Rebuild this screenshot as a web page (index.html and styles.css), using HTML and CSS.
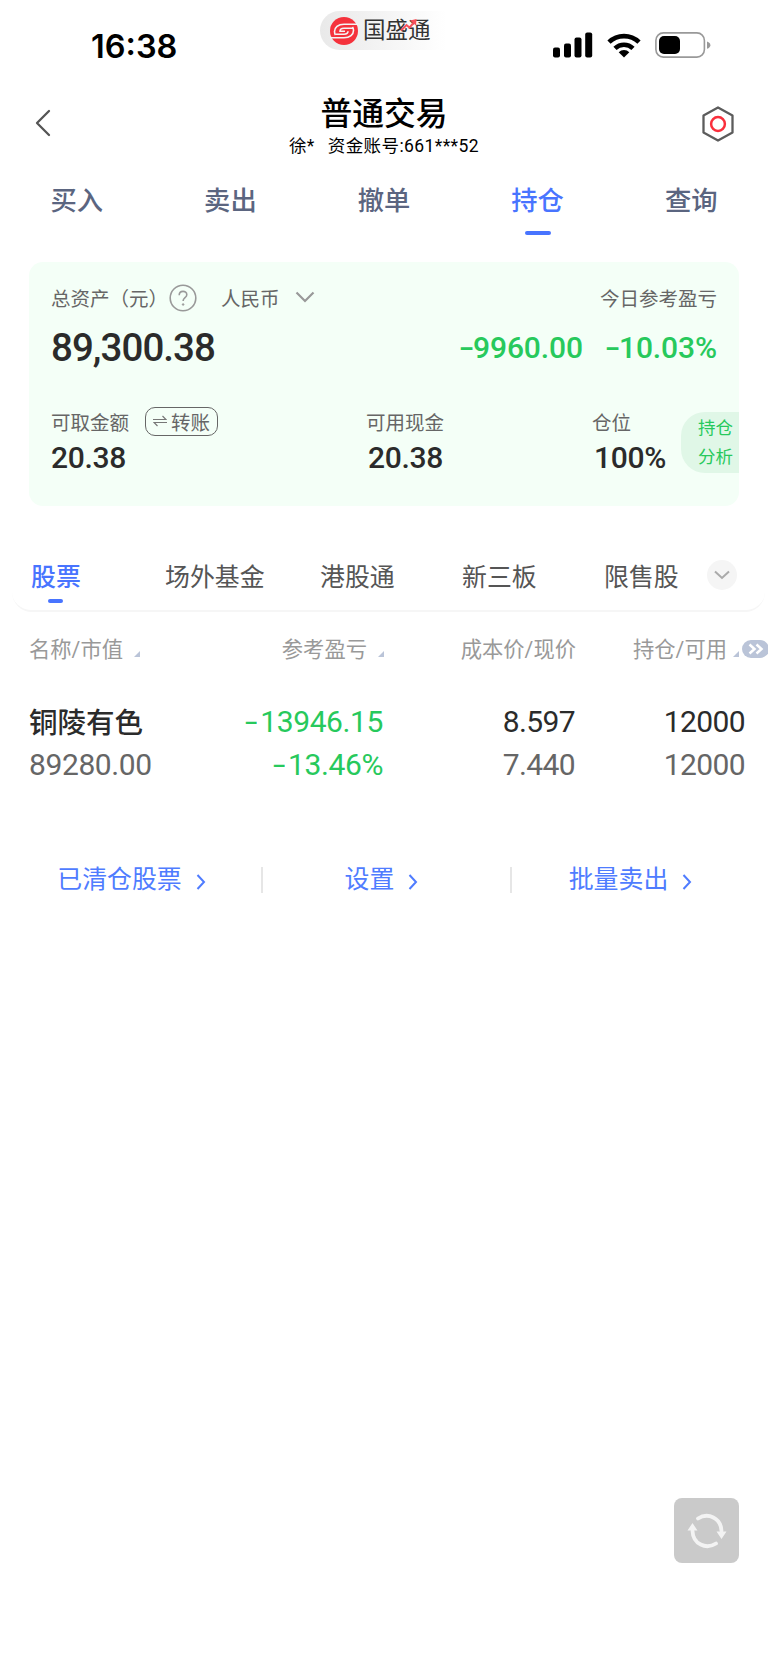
FILE: index.html
```html
<!DOCTYPE html>
<html lang="zh-CN">
<head>
    <meta charset="UTF-8">
    <title>普通交易</title>
    <link rel="stylesheet" href="styles.css">
</head>
<body>
    <div class="container">
        <div class="status">
            <span class="time">16:38</span>
            <div class="brand">
                <svg width="28" height="28" viewBox="0 0 28 28" fill="none" stroke="#f4f4f4" stroke-width="1.600">
                    <circle cx="14" cy="14" r="14" fill="#f5323c" stroke="none"/>
                    <path d="M28 7.200H14C8 7.200 4.500 10.500 4.500 14.500c0 1.500.3 2.500 1 3.500M0 20.800h14c6 0 9.500-3.300 9.500-7.300 0-1.500-.3-2.500-1-3.500"/>
                    <path d="M23 11.300H14c-2.500 0-4 1-4 3h5M5.500 17.200H14c2.500 0 4-1 4-2.900"/>
                </svg>
                <span>国盛通</span>
                <svg class="trend" width="18" height="13" viewBox="0 0 18 13">
                    <path d="M1 11.500L6.500 6l3 2.500 4-4.500" fill="none" stroke="#f8505a" stroke-width="2"/>
                    <path d="M10 1.500L16.500 0l-.5 6.500z" fill="#f8505a"/>
                </svg>
            </div>
            <div class="signals">
                <svg width="40" height="26" viewBox="0 0 40 26">
                    <rect x="0" y="15.500" width="7" height="10" rx="2"/>
                    <rect x="11" y="11.500" width="7" height="14" rx="2"/>
                    <rect x="21.500" y="5.500" width="7" height="20" rx="2"/>
                    <rect x="32.200" y="0.500" width="7" height="25" rx="2"/>
                </svg>
                <svg width="34" height="26" viewBox="0 0 34 26">
                    <path d="M2 10.200a21.500 21.500 0 0 1 30 0M8 16.300a13 13 0 0 1 18 0" fill="none" stroke="#000" stroke-width="4.600"/>
                    <path d="M17 25.500l-5.300-5.200a7.500 7.500 0 0 1 10.600 0z"/>
                </svg>
                <svg width="56" height="26" viewBox="0 0 56 26">
                    <rect x="0.900" y="0.900" width="48.500" height="24.200" rx="7.500" fill="none" stroke="#999" stroke-width="1.600"/>
                    <rect x="4" y="4" width="21" height="18" rx="5"/>
                    <path d="M52 9.500c4.500 1.500 4.500 5.800 0 7.300z" fill="#999"/>
                </svg>
            </div>
        </div>

        <header class="header">
            <svg width="32" height="28" viewBox="0 0 32 28" fill="none" stroke="#555" stroke-width="2.300" stroke-linecap="round" stroke-linejoin="round">
                <path d="M15 2L3 14l12 12"/>
            </svg>
            <div class="heading">
                <h1>普通交易</h1>
                <p>徐*<span>资金账号:661***52</span></p>
            </div>
            <svg width="32" height="36" viewBox="0 0 32 36" fill="none">
                <path d="M16 1.500l14.500 8v17L16 34.500l-14.500-8v-17z" stroke="#5c5c5c" stroke-width="2.300" stroke-linejoin="round"/>
                <circle cx="16" cy="18" r="6.900" stroke="#fa2f3c" stroke-width="2.500"/>
            </svg>
        </header>

        <nav class="navi">
            <a>买入</a>
            <a>卖出</a>
            <a>撤单</a>
            <a class="active">持仓</a>
            <a>查询</a>
        </nav>

        <section class="asset">
            <div class="asset-top">
                <span>总资产（元）</span>
                <svg class="help" width="28" height="28" viewBox="0 0 28 28" fill="none" stroke="#999">
                    <circle cx="14" cy="14" r="12.800" stroke-width="1.600"/>
                    <path d="M10.200 11.200c0-5 7.600-5 7.600-.5 0 3-3.700 3-3.700 6.300" stroke-width="1.600"/>
                    <circle cx="14.100" cy="20.500" r="0.800" fill="#999"/>
                </svg>
                <span>人民币</span>
                <svg class="down" width="20" height="12" viewBox="0 0 20 12" fill="none" stroke="#999" stroke-width="2.200">
                    <path d="M1.500 1.500L10 10l8.500-8.500"/>
                </svg>
                <span class="today">今日参考盈亏</span>
            </div>
            <div class="asset-total">
                <strong>89,300.38</strong>
                <span class="loss"><i>-</i>9960.00</span>
                <span class="loss"><i>-</i>10.03%</span>
            </div>
            <div class="asset-bottom">
                <dl>
                    <dt>可取金额
                        <span class="transfer">
                            <svg width="14" height="12" viewBox="0 0 14 12" fill="none" stroke="#777" stroke-width="1.200">
                                <path d="M0 4.500h13L9.500 1M14 7.500H1L4.500 11"/>
                            </svg>转账</span>
                    </dt>
                    <dd>20.38</dd>
                </dl>
                <dl>
                    <dt>可用现金</dt>
                    <dd>20.38</dd>
                </dl>
                <dl>
                    <dt>仓位</dt>
                    <dd>100%</dd>
                </dl>
                <a class="analysis">持仓<br>分析</a>
            </div>
        </section>

        <nav class="kinds">
            <a class="active">股票</a>
            <a>场外基金</a>
            <a>港股通</a>
            <a>新三板</a>
            <a>限售股</a>
            <span class="more">
                <svg width="16" height="10" viewBox="0 0 16 10" fill="none" stroke="#aaa" stroke-width="2">
                    <path d="M1 1.500l7 6.500 7-6.500"/>
                </svg>
            </span>
        </nav>

        <section class="stocks">
            <div class="row title">
                <span class="sort">名称/市值</span>
                <span class="sort">参考盈亏</span>
                <span>成本价/现价</span>
                <span class="sort">持仓/可用</span>
                <svg class="next" width="27" height="18" viewBox="0 0 27 18" fill="none">
                    <rect width="27" height="18" rx="9" fill="#bac4d8"/>
                    <path d="M7.500 4.500l5 4.500-5 4.500M14.500 4.500l5 4.500-5 4.500" stroke="#fff" stroke-width="2.500"/>
                </svg>
            </div>
            <div class="row">
                <strong>铜陵有色</strong>
                <span class="loss"><i>-</i>13946.15</span>
                <span>8.597</span>
                <span>12000</span>
            </div>
            <div class="row second">
                <span>89280.00</span>
                <span class="loss"><i>-</i>13.46%</span>
                <span>7.440</span>
                <span>12000</span>
            </div>
        </section>

        <div class="links">
            <a>已清仓股票<svg width="10" height="16" viewBox="0 0 10 16"><path d="M1.500 1l6.500 7-6.500 7"/></svg></a>
            <a>设置<svg width="10" height="16" viewBox="0 0 10 16"><path d="M1.500 1l6.500 7-6.500 7"/></svg></a>
            <a>批量卖出<svg width="10" height="16" viewBox="0 0 10 16"><path d="M1.500 1l6.500 7-6.500 7"/></svg></a>
        </div>

        <button class="refresh">
            <svg width="42" height="36" viewBox="0 0 42 36" fill="none" stroke="#f3f3f3" stroke-width="3.800" stroke-linecap="round">
                <path d="M12 5.500C22-1 35 5 35.500 18M30 30.500C20 37 7 31 6.500 18"/>
                <path d="M30.500 18.500h10L35.500 26zM1.500 17.500h10L6.500 10z" fill="#f3f3f3" stroke="none"/>
            </svg>
        </button>
    </div>
</body>
</html>
```
FILE: styles.css
```css
* {
    box-sizing: border-box;
    margin: 0;
    padding: 0;
}

body {
    background: #fff;
    color: #2b2b2b;
    font-family: Roboto, "Noto Sans CJK SC", sans-serif;
}

svg {
    display: block;
    flex: none;
}

.container {
    position: relative;
    width: 768px;
    height: 1662px;
    overflow: hidden;
}

/* 状态栏 */
.status {
    display: grid;
    grid-template-columns: 320px 126px 1fr;
    height: 86px;
}

.time {
    padding: 27px 0 0 91px;
    font: 600 32.500px/40px Inter, sans-serif;
    color: #000;
}

.brand {
    position: relative;
    display: flex;
    align-items: center;
    gap: 5px;
    height: 39px;
    margin-top: 11px;
    padding-left: 10px;
    border-radius: 20px 0 0 20px;
    background: linear-gradient(90deg, #e9e9e9, #fff);
    font-size: 22.500px;
    line-height: 38px;
    color: #333;
}

.brand span {
    margin-top: -2px;
}

.trend {
    position: absolute;
    left: 80px;
    top: 8px;
}

.signals {
    display: flex;
    justify-content: flex-end;
    gap: 14px;
    padding: 32px 57px 0 0;
}

/* 标题 */
.header {
    display: flex;
    justify-content: space-between;
    height: 84px;
    padding: 7px 34px 0;
}

.header > svg {
    margin-top: 13px;
}

.header > svg:first-child {
    margin-top: 16px;
}

.heading {
    color: #000;
    text-align: center;
}

h1 {
    font-size: 31.800px;
    font-weight: 500;
    line-height: 42px;
}

.heading p {
    font-size: 17.500px;
    line-height: 22px;
    letter-spacing: 0.400px;
}

.heading p span {
    margin-left: 13px;
}

/* 主菜单 */
.navi {
    display: flex;
    height: 92px;
}

.navi a {
    flex: 1;
    height: 66px;
    padding-top: 11px;
    font-size: 26.300px;
    font-weight: 500;
    line-height: 40px;
    text-align: center;
    color: #5b6580;
}

.navi .active,
.kinds .active {
    color: #4874ff;
}

.navi .active::after,
.kinds .active::after {
    content: "";
    display: block;
    width: 26px;
    height: 4px;
    margin: 10px auto 0;
    border-radius: 2px;
    background: #4874ff;
}

/* 资产 */
.asset {
    height: 244px;
    margin: 0 29px;
    padding: 15px 0 0 22px;
    border-radius: 14px;
    background: #f4fff7;
}

.asset-top {
    display: flex;
    align-items: center;
    height: 40px;
    padding-right: 22px;
    font-size: 19.500px;
    color: #666;
}

.help {
    margin: 1px 24px 0 1px;
}

.down {
    margin-left: 15px;
}

.today {
    margin-left: auto;
}

.asset-total {
    display: flex;
    align-items: center;
    height: 60px;
    padding-right: 22px;
    font-size: 30px;
    font-weight: 500;
    letter-spacing: -0.100px;
}

.asset-total strong {
    margin-right: auto;
    font-size: 38.500px;
    font-weight: 500;
    letter-spacing: -0.950px;
}

.asset-total .loss + .loss {
    margin-left: 22px;
}

.loss {
    color: #27c95c;
}

/* 数字前的负号 */
.loss i {
    display: inline-block;
    width: 14px;
    font-style: normal;
    text-align: left;
    transform: scaleX(1.500);
    transform-origin: left;
}

.asset-bottom {
    display: grid;
    grid-template-columns: 315px 226px 89px 58px;
    margin-top: 22px;
}

.asset-bottom dt {
    display: flex;
    align-items: center;
    height: 44px;
    font-size: 19.500px;
    color: #666;
}

.asset-bottom dd {
    margin-top: 1px;
    font-size: 30px;
    font-weight: 500;
    line-height: 28px;
    letter-spacing: -0.300px;
}

.asset-bottom dl + dl dd {
    padding-left: 2px;
}

.transfer {
    display: flex;
    align-items: center;
    gap: 4px;
    height: 29px;
    margin-left: 16px;
    padding: 0 7px;
    border: 1.500px solid #666;
    border-radius: 10px;
}

.analysis {
    height: 61px;
    margin-top: 13px;
    padding: 2px 0 0 17px;
    border-radius: 24px 0 0 24px;
    background: #e0f7e7;
    font-size: 17.500px;
    line-height: 28.500px;
    color: #27c95c;
}

/* 持仓分类 */
.kinds {
    display: grid;
    grid-template-columns: 134px 155px 142px 142px 103px 30px;
    height: 72px;
    margin: 34px 3px 0 12px;
    padding: 18px 0 0 19px;
    border-bottom: 2px solid #f6f6f6;
    border-radius: 0 0 20px 20px;
    font-size: 24.900px;
    line-height: 40px;
    color: #555;
}

.kinds .active {
    width: 50px;
    font-weight: 500;
}

.kinds .active::after {
    width: 15px;
    margin-top: 1px;
    margin-left: 17px;
}

.more {
    display: flex;
    align-items: center;
    justify-content: center;
    width: 30px;
    height: 30px;
    margin-top: 2px;
    border-radius: 50%;
    background: #f5f5f5;
}

/* 股票列表 */
.row {
    display: grid;
    grid-template-columns: 151px 203px 192px 170px;
    align-items: center;
    height: 43px;
    padding-left: 29px;
    font-size: 30px;
    letter-spacing: -0.600px;
}

.row > span:not(:first-child) {
    text-align: right;
}

.row strong {
    margin-top: -3px;
    font-size: 28.500px;
    font-weight: 500;
    letter-spacing: 0;
}

.row.second {
    color: #666;
}

.row.second > span:first-child {
    letter-spacing: -0.400px;
}

.row .loss {
    letter-spacing: -0.400px;
}

.row .loss i {
    width: 15px;
}

.row.title {
    grid-template-columns: 151px 204px 192px 163px 27px;
    height: 88px;
    padding-bottom: 17px;
    font-size: 21.300px;
    letter-spacing: 0;
    color: #999;
}

.sort::after {
    content: "";
    display: inline-block;
    margin-left: 11px;
    border-left: 6px solid transparent;
    border-bottom: 6px solid #bac4d8;
}

.sort:nth-child(4)::after {
    margin-left: 6px;
}

.next {
    margin: 2px 0 0 3px;
}

/* 底部链接 */
.links {
    display: flex;
    height: 26px;
    margin-top: 81px;
    padding-left: 12px;
}

.links a {
    display: flex;
    align-items: center;
    justify-content: center;
    width: 249px;
    padding-right: 10px;
    font-size: 24.900px;
    line-height: 28px;
    color: #4f7cff;
}

.links a + a {
    border-left: 2px solid #e6e6e6;
}

.links svg {
    margin: 3px 0 0 14px;
    fill: none;
    stroke: #4f7cff;
    stroke-width: 2;
}

.refresh {
    position: absolute;
    right: 29px;
    bottom: 99px;
    display: flex;
    align-items: center;
    justify-content: center;
    width: 65px;
    height: 65px;
    border: none;
    border-radius: 8px;
    background: #cacaca;
}
```
